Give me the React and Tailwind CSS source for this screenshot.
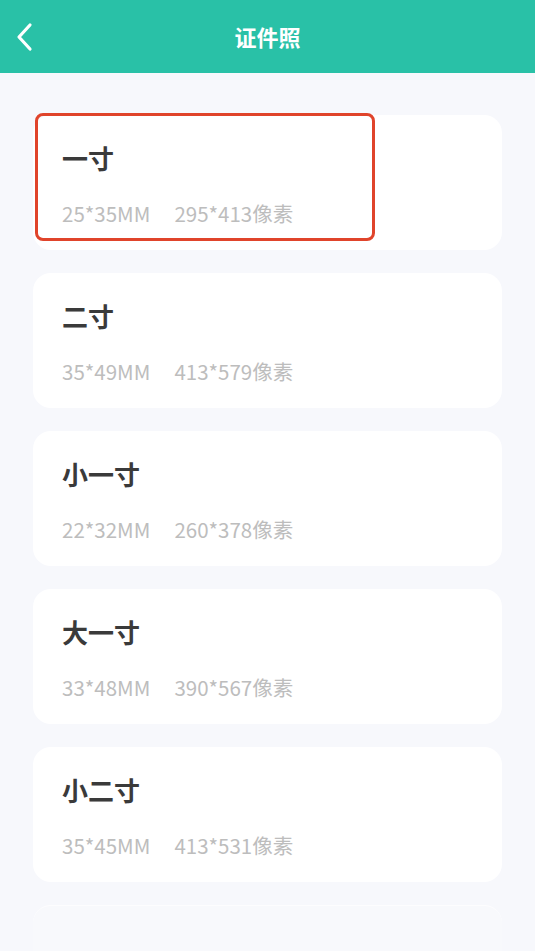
import React from 'react';

const sizes = [
  { name: '一寸', mm: '25*35MM', px: '295*413像素' },
  { name: '二寸', mm: '35*49MM', px: '413*579像素' },
  { name: '小一寸', mm: '22*32MM', px: '260*378像素' },
  { name: '大一寸', mm: '33*48MM', px: '390*567像素' },
  { name: '小二寸', mm: '35*45MM', px: '413*531像素' },
];

function SizeCard({ item, selected }) {
  return (
    <div className="relative h-[135px] rounded-[18px] bg-white pl-[29px] pt-[25px]">
      <div className="text-[26px] leading-[36px] font-bold text-[#3a3a3a]">{item.name}</div>
      <div className="mt-[23px] flex gap-[24px] text-[20.5px] leading-[28px] text-[#bdbdbd]">
        <span>{item.mm}</span>
        <span>{item.px}</span>
      </div>
      {selected && (
        <div className="absolute left-[2px] top-[-2px] w-[340px] h-[128px] rounded-[8px] border-[3px] border-[#e0442b]"></div>
      )}
    </div>
  );
}

export default function App() {
  return (
    <div className="w-[535px] h-[951px] overflow-hidden bg-[#f7f8fc]" style={{ fontFamily: '"Noto Sans CJK SC", "Noto Sans", sans-serif' }}>
      {/* Header */}
      <div className="relative h-[73px] bg-[#29c1a7] flex items-center justify-center">
        <svg className="absolute left-[14px] top-[22px] w-[22px] h-[30px]" viewBox="0 0 22 30" fill="none">
          <path d="M16 3 L5 15 L16 27" stroke="white" strokeWidth="3.2" strokeLinecap="round" strokeLinejoin="round" />
        </svg>
        <span className="text-white text-[22px] font-bold">证件照</span>
      </div>

      {/* List */}
      <div className="flex flex-col gap-[23px] px-[33px] pt-[42px]">
        {sizes.map((item, i) => (
          <SizeCard key={item.name} item={item} selected={i === 0} />
        ))}
        <div className="h-[135px] rounded-[18px] bg-[#f8f9fc] border-t border-[#fdfdfe]"></div>
      </div>
    </div>
  );
}
